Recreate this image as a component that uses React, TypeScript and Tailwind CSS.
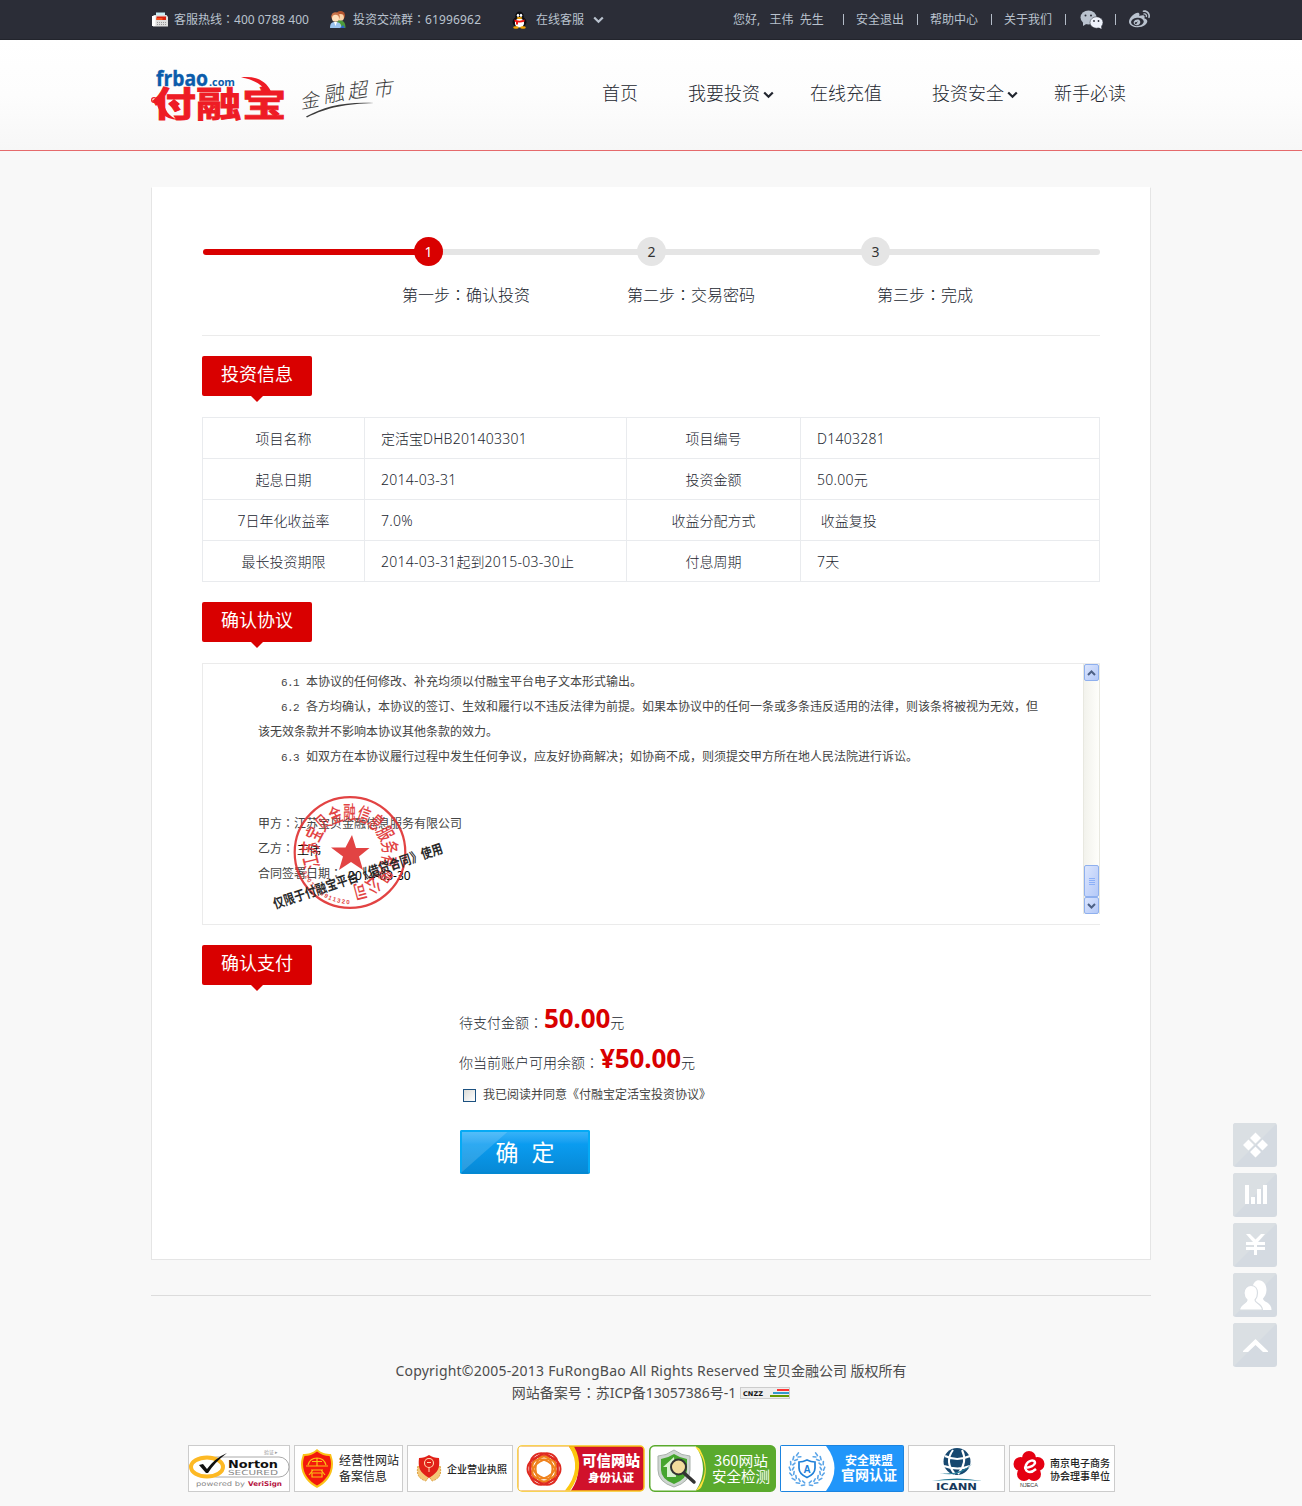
import React from "react";
import { FaWeibo } from "react-icons/fa";

const cjk = "font-['Noto_Sans','Noto_Sans_CJK_SC',sans-serif]";
const S = "'Noto Sans CJK SC', sans-serif";

function Colon() {
  return <span className="font-['Noto_Sans_CJK_TC',sans-serif] leading-none">：</span>;
}

function Chevron({ color, size = 11 }: { color: string; size?: number }) {
  return (
    <svg width={size} height="8" viewBox="0 0 11 8" className="shrink-0">
      <path d="M1.2 1.5 5.5 5.8 9.8 1.5" fill="none" stroke={color} strokeWidth="2.2" />
    </svg>
  );
}

function TopBar() {
  const sep = <span className="h-[11px] w-px bg-[#b4bcc8]" />;
  return (
    <div className="h-10 border-b border-[#22242c] bg-[#2b2d37]">
      <div className="mx-auto flex h-[39px] w-[1000px] items-center text-xs whitespace-nowrap text-[#b9c2ce]">
        <svg width="18" height="18" viewBox="0 0 18 18">
          <path d="M5 1.500h9v5H5z" fill="#c9eef5" />
          <path d="M3 4h12.500l1.500 2v9.500H2V5z" fill="#dedede" />
          <path d="M1 5h3.500v10H1z" fill="#fff" />
          <path d="M5.500 5.500h9.500v3.500H5.500z" fill="#d8210d" />
          <path d="M5.500 7h6v2h-6z" fill="#f4511b" />
          <path d="M6 11.500h9M6 13.500h9" stroke="#999" strokeDasharray="1 1" />
        </svg>
        <span className="ml-[5px] w-[157px]">客服热线<Colon />400 0788 400</span>
        <svg width="18" height="20" viewBox="0 0 18 20" className="-ml-0.5 shrink-0">
          <circle cx="11.500" cy="5.500" r="4.500" fill="#b5552f" />
          <circle cx="11.500" cy="7.500" r="3.400" fill="#fbd3a8" />
          <path d="M6.500 18c0-6 2-7.500 5-7.500s5 2 5 7.500z" fill="#4d9a3b" />
          <circle cx="6.500" cy="6.500" r="4.300" fill="#c9744a" />
          <circle cx="6.500" cy="8.300" r="3.500" fill="#ffe0bb" />
          <path d="M1 18c0-4.500 1.500-6 5.500-6s6 2 6 6z" fill="#9cc4ee" />
          <path d="M5 12h3l-1.500 4z" fill="#fff" />
          <path d="M11 18l3-3 2 3z" fill="#2c63c8" />
        </svg>
        <span className="ml-[6px] w-[159px]">投资交流群<Colon /><span className="tracking-[0.15px]">61996962</span></span>
        <svg width="17" height="18" viewBox="0 0 17 18" className="-ml-px shrink-0">
          <ellipse cx="8.500" cy="11" rx="7" ry="5.500" fill="#0d0d12" />
          <ellipse cx="8.500" cy="5.500" rx="4.300" ry="5" fill="#0d0d12" />
          <ellipse cx="8.500" cy="12" rx="4.600" ry="4.500" fill="#fff" />
          <ellipse cx="7" cy="4.300" rx="1.200" ry="1.600" fill="#fff" />
          <ellipse cx="10" cy="4.300" rx="1.200" ry="1.600" fill="#fff" />
          <ellipse cx="8.500" cy="7" rx="2.800" ry="1" fill="#f5a500" />
          <path d="M3.500 8.500c3 1.500 7 1.500 10 0v2c-3 1.200-7 1.200-10 0z" fill="#e11" />
          <path d="M5 10.500h2v3H5z" fill="#e11" />
          <ellipse cx="5" cy="16.500" rx="2.800" ry="1.200" fill="#f5a500" />
          <ellipse cx="12" cy="16.500" rx="2.800" ry="1.200" fill="#f5a500" />
        </svg>
        <span className="ml-[8px] mr-[9px]">在线客服</span>
        <Chevron color="#b9c2ce" />
        <div className="ml-auto flex items-center">
          <span className="w-[110px]">您好,&nbsp;&nbsp; 王伟&nbsp; 先生</span>
          {sep}
          <span className="mx-[12px] w-[49px]">安全退出</span>
          {sep}
          <span className="mx-[12px] w-[49px]">帮助中心</span>
          {sep}
          <span className="mx-[12px] w-[49px]">关于我们</span>
          {sep}
          <svg width="24" height="20" viewBox="0 0 24 20" className="ml-[14px] mr-[11px]">
            <ellipse cx="8.500" cy="7.500" rx="8" ry="7" fill="#b9c2ce" />
            <path d="M3 12v4l4-2.500z" fill="#b9c2ce" />
            <circle cx="5.500" cy="5.500" r="1" fill="#2b2d37" />
            <circle cx="11" cy="5.500" r="1" fill="#2b2d37" />
            <ellipse cx="16.500" cy="12.500" rx="6.500" ry="5.700" fill="#eef2fb" stroke="#2b2d37" strokeWidth=".5" />
            <path d="M18 17l3.500 2-.5-4z" fill="#eef2fb" />
            <circle cx="14" cy="11" r=".9" fill="#2b2d37" />
            <circle cx="18.500" cy="11" r=".9" fill="#2b2d37" />
          </svg>
          {sep}
          <FaWeibo className="mr-px ml-[13px] size-[21px] text-[#b9c2ce]" />
        </div>
      </div>
    </div>
  );
}

function Logo() {
  return (
    <svg width="245" height="60" viewBox="0 0 245 60" className="block">
      <text x="5" y="20.500" fontFamily="Open Sans" fontWeight="700" fontSize="20.500" fill="#0b5cab" stroke="#0b5cab" strokeWidth=".4" textLength="52" lengthAdjust="spacingAndGlyphs">frbao</text>
      <text x="58" y="20.500" fontFamily="Open Sans" fontWeight="700" fontSize="10.500" fill="#0b5cab" textLength="26" lengthAdjust="spacingAndGlyphs">.com</text>
      <g fill="#ee1c25" stroke="#ee1c25">
        <g fontFamily={S} fontWeight="700" strokeWidth=".9">
          <text transform="translate(1 51.5) scale(1.26 1)" fontSize="35">付</text>
          <text transform="translate(45 51.5) scale(1.3 1)" fontSize="35">融</text>
          <text transform="translate(91 51.5) scale(1.27 1)" fontSize="35">宝</text>
        </g>
        <path d="M90 12.500c14-2 25 3 30 14l-5 0c-4-7-12-12-25-14z" strokeWidth="0" />
        <path d="M5 32c0 14 8 22 22 23-9-4-14-9-15-22z" strokeWidth="0" />
        <path d="M23 34l6 5-6 5-6-5z" strokeWidth="0" />
        <circle cx="3" cy="35" r="2.400" fill="none" strokeWidth="1.200" />
      </g>
      <g fill="#3c3c3c" fontFamily={S} fontWeight="300">
        <text transform="translate(150 44) rotate(-10) skewX(-14)" fontSize="19">金</text>
        <text transform="translate(173 38) rotate(-10) skewX(-14)" fontSize="21">融</text>
        <text transform="translate(197 34) rotate(-8) skewX(-14)" fontSize="20">超</text>
        <text transform="translate(222 32) rotate(-6) skewX(-14)" fontSize="20">市</text>
        <path d="M155 51.500c18-10 38-15 68-13.500-28 1-46 4-67 14.500z" />
      </g>
    </svg>
  );
}

function Header() {
  return (
    <header className="h-[111px] border-b border-[#e56a6c] bg-gradient-to-b from-white via-[#fdfdfd] to-[#f7f7f7]">
      <div className="mx-auto flex w-[1000px] pt-[25px]">
        <Logo />
        <nav className="ml-[206px] mt-[14px] flex h-7 items-center text-[18px] font-light whitespace-nowrap text-[#22262f]">
          <a className="w-[86px]">首页</a>
          <a className="flex w-[122px] items-center gap-[3px]">我要投资<span className="pt-[3px]"><Chevron color="#22262f" /></span></a>
          <a className="w-[122px]">在线充值</a>
          <a className="flex w-[122px] items-center gap-[3px]">投资安全<span className="pt-[3px]"><Chevron color="#22262f" /></span></a>
          <a>新手必读</a>
        </nav>
      </div>
    </header>
  );
}

function Steps() {
  return (
    <div className="h-[99px] border-b border-[#ebebeb]">
      <div className="flex h-[29px] items-center pl-px text-sm text-[#333]">
        <span className="h-1.5 w-[213px] rounded-l-full bg-[#d90000]" />
        <span className="z-10 -ml-0.5 flex size-[29px] items-center justify-center rounded-full bg-[#d90000] text-white">1</span>
        <span className="-ml-px h-1.5 w-[196px] bg-[#e5e5e5]" />
        <span className="-ml-px flex size-[29px] items-center justify-center rounded-full bg-[#e5e5e5]">2</span>
        <span className="-ml-px h-1.5 w-[197px] bg-[#e5e5e5]" />
        <span className="-ml-px flex size-[29px] items-center justify-center rounded-full bg-[#e5e5e5]">3</span>
        <span className="-ml-px h-1.5 flex-1 rounded-r-full bg-[#e5e5e5]" />
      </div>
      <div className="mt-[17px] flex pl-[200px] text-base leading-6 font-light text-[#22262f]">
        <span className="w-[225px]">第一步<Colon />确认投资</span>
        <span className="w-[250px]">第二步<Colon />交易密码</span>
        <span>第三步<Colon />完成</span>
      </div>
    </div>
  );
}

function Tag({ children }: { children: React.ReactNode }) {
  return (
    <div className="h-[46px]">
      <h2 className="h-10 w-[110px] rounded-[2px] bg-[#d90000] text-center text-[18px] leading-[36px] text-white">{children}</h2>
      <div className="ml-[49px] h-0 w-0 border-x-[6.5px] border-t-[6px] border-x-transparent border-t-[#d90000]" />
    </div>
  );
}

const rows = [
  ["项目名称", "定活宝DHB201403301", "项目编号", "D1403281"],
  ["起息日期", "2014-03-31", "投资金额", "50.00元"],
  ["7日年化收益率", "7.0%", "收益分配方式", "\u00a0收益复投"],
  ["最长投资期限", "2014-03-31起到2015-03-30止", "付息周期", "7天"],
];

// Latin runs are spaced a little wider than the Chinese text around them.
function Mixed({ text }: { text: string }) {
  return (
    <>
      {text.split(/([0-9A-Z.%-]+)/).map((part, i) =>
        i % 2 ? <span key={i} className="tracking-[0.25px]">{part}</span> : part,
      )}
    </>
  );
}

function InfoTable() {
  return (
    <div className="mt-[15px] border-t border-l border-[#e9ebee] text-sm font-light text-[#22262f]">
      {rows.map((r) => (
        <div key={r[0]} className="grid h-[41px] grid-cols-[162px_262px_174px_299px] text-center leading-[41px] *:h-[41px] *:border-r *:border-b *:border-[#e9ebee]">
          <div>{r[0]}</div>
          <div className="pl-4 text-left"><Mixed text={r[1]} /></div>
          <div>{r[2]}</div>
          <div className="pl-4 text-left"><Mixed text={r[3]} /></div>
        </div>
      ))}
    </div>
  );
}

const ringChars = "江苏宝贝金融信息服务有限公司".split("");
const ringDigits = "3201000911320".split("");

function Seal() {
  return (
    <svg width="190" height="125" viewBox="265 790 190 125" className="absolute top-[126px] left-[62px]">
      <g fill="#e03434" opacity=".92">
        <circle cx="350" cy="852.500" r="55.300" fill="none" stroke="#e03434" strokeWidth="2.200" />
        <path d="M352 835l4 13 13.500 0-10.500 8.500 4 13.500-12-8-12 8 4-13.500-12-9 14.500 0z" />
        {ringChars.map((c, i) => (
          <text key={i} transform={`translate(350 852.5) rotate(${-104 + i * 20.7}) translate(0 -33) scale(.82 1.25)`} textAnchor="middle" fontFamily={S} fontWeight="500" fontSize="15.500">{c}</text>
        ))}
        {ringDigits.map((c, i) => (
          <text key={i} transform={`translate(350 852.5) rotate(${66 - i * 5.3}) translate(0 51.500)`} textAnchor="middle" fontFamily="Liberation Sans" fontWeight="700" fontSize="6">{c}</text>
        ))}
      </g>
      <text transform="translate(275 909) rotate(-18.5)" fontFamily={S} fontWeight="600" fontSize="13.500" fill="#2a2a2a" textLength="178" lengthAdjust="spacingAndGlyphs">仅限于付融宝平台《借贷合同》使用</text>
    </svg>
  );
}

function Scrollbar() {
  const btn = "flex w-[15px] items-center justify-center rounded-[2px] border border-[#8fb0ee] bg-gradient-to-br from-[#dbe5fd] to-[#b4c9f8]";
  return (
    <div className="flex h-[250px] w-[17px] flex-col items-center border-x border-[#e8e8e0] bg-gradient-to-r from-[#f2f2ec] to-[#fefefb]">
      <div className={`${btn} h-[17px]`}>
        <svg width="9" height="6" viewBox="0 0 9 6"><path d="M1 5l3.500-3.500L8 5" fill="none" stroke="#4d6185" strokeWidth="2" /></svg>
      </div>
      <div className={`${btn} mt-auto h-[32px]`}>
        <div className="flex flex-col gap-px">
          <i className="h-px w-1.5 bg-[#8cb0f8]" /><i className="h-px w-1.5 bg-[#8cb0f8]" /><i className="h-px w-1.5 bg-[#8cb0f8]" /><i className="h-px w-1.5 bg-[#8cb0f8]" />
        </div>
      </div>
      <div className={`${btn} h-[17px]`}>
        <svg width="9" height="6" viewBox="0 0 9 6"><path d="M1 1l3.500 3.500L8 1" fill="none" stroke="#4d6185" strokeWidth="2" /></svg>
      </div>
    </div>
  );
}

function Clause({ n }: { n: string }) {
  return <span className="ml-[23px] inline-block w-[25px] font-['Liberation_Mono',monospace] text-[11px] leading-none tracking-[-0.6px]">{n}</span>;
}

function Agreement() {
  return (
    <div className="relative mt-[15px] flex h-[262px] justify-between border-y border-l border-[#ebebeb]">
      <div className="pt-[5px] pl-[55px] text-xs leading-[25px] whitespace-nowrap text-[#444]">
        <p><Clause n="6.1" />本协议的任何修改、补充均须以付融宝平台电子文本形式输出。</p>
        <p><Clause n="6.2" />各方均确认，本协议的签订、生效和履行以不违反法律为前提。如果本协议中的任何一条或多条违反适用的法律，则该条将被视为无效，但</p>
        <p>该无效条款并不影响本协议其他条款的效力。</p>
        <p><Clause n="6.3" />如双方在本协议履行过程中发生任何争议，应友好协商解决；如协商不成，则须提交甲方所在地人民法院进行诉讼。</p>
        <div className="mt-[42px]">
          <p>甲方<Colon />江苏宝贝金融信息服务有限公司</p>
          <p className="flex h-[25px]"><span>乙方<Colon /></span><span className="mt-[2px] ml-[3px] text-black">王伟</span></p>
          <p className="flex h-[25px]"><span>合同签署日期<Colon /></span><span className="mt-[2px] ml-[6px] text-black">2014-03-30</span></p>
        </div>
      </div>
      <Seal />
      <Scrollbar />
    </div>
  );
}

function Payment() {
  return (
    <div className="pl-[257px] text-[#22262f]">
      <p className="mt-[7px] h-10 text-sm leading-10 font-light">待支付金额<Colon /><b className="ml-px text-[26px] leading-[40px] font-bold tracking-[-0.1px] text-[#d90000]">50.00</b>元</p>
      <p className="h-10 text-sm leading-10 font-light">你当前账户可用余额<Colon /><b className="ml-px text-[26px] leading-[40px] font-bold tracking-[-0.1px] text-[#d90000]">¥50.00</b>元</p>
      <label className="mt-[7px] flex h-5 items-center text-xs text-[#444]">
        <span className="mr-[7px] ml-1 size-[13px] border border-[#1c5180] bg-gradient-to-br from-[#dcdcd7] to-white" />
        我已阅读并同意《付融宝定活宝投资协议》
      </label>
      <button className="relative mt-[25px] ml-px block h-[44px] w-[130px] overflow-hidden rounded-[2px] border-2 border-[#05aaf5] border-b-[#0488d2] bg-gradient-to-b from-[#35b2f8] via-[#0a9cf0] via-30% to-[#0789d6] text-[23px] leading-[40px] text-white">
        <span className="absolute inset-0 bg-white/15 [clip-path:polygon(0_0,36%_0,0_100%)]" />
        <span className="relative">确<span className="inline-block w-[13px]" />定</span>
      </button>
    </div>
  );
}

function Laurel({ flip = false }: { flip?: boolean }) {
  return (
    <g transform={flip ? "translate(54 0) scale(-1 1)" : undefined} fill="none" stroke="#5ba5e8" strokeWidth="1.600" strokeLinecap="round">
      {[0, 1, 2, 3, 4, 5, 6, 7].map((i) => (
        <g key={i} transform={`rotate(${-75 + i * 19} 27 23.500)`}>
          <path d="M10.500 25.500l-1.300-3M12.500 25l1.300-2.500" />
        </g>
      ))}
    </g>
  );
}

function Badges() {
  const box = "block shrink-0";
  return (
    <div className="mx-auto mt-[41px] flex w-[927px] gap-1">
      <svg className={box} width="102" height="47" viewBox="0 0 102 47">
        <rect x=".5" y=".5" width="101" height="46" fill="#fff" stroke="#ccc" />
        <rect x="18" y="12" width="83" height="20" rx="10" fill="#fff" stroke="#aaa" />
        <ellipse cx="19" cy="22" rx="16" ry="9.500" fill="#fff" stroke="#fdb924" strokeWidth="4" />
        <path d="M11 20l4-1 4 5q8-11 20-16-12 9-19 20h-2z" fill="#111" />
        <text x="40" y="23" fontFamily="DejaVu Sans" fontWeight="700" fontSize="10.500" textLength="50" lengthAdjust="spacingAndGlyphs" fill="#111">Norton</text>
        <text x="40" y="29.500" fontFamily="DejaVu Sans" fontSize="7" textLength="50" lengthAdjust="spacingAndGlyphs" fill="#888">SECURED</text>
        <text x="76" y="9" fontFamily={S} fontSize="5" fill="#999">验证 ▸</text>
        <text x="8" y="41" fontFamily="DejaVu Sans" fontSize="6.500" textLength="49" lengthAdjust="spacingAndGlyphs" fill="#888">powered by</text>
        <text x="60" y="41" fontFamily="DejaVu Sans" fontWeight="700" fontSize="6.500" textLength="34" lengthAdjust="spacingAndGlyphs" fill="#b5123e">VeriSign</text>
      </svg>
      <svg className={box} width="109" height="47" viewBox="0 0 109 47">
        <rect x=".5" y=".5" width="108" height="46" fill="#fff" stroke="#ccc" />
        <path d="M23 4c4 4 9 5 14 5 1 4 2 6 2 10 0 12-8 20-16 24C15 39 7 31 7 19c0-4 1-6 2-10 5 0 10-1 14-5z" fill="#fbc116" />
        <path d="M23 6.500c4 3 8 4.500 12.500 4.500 1 3 1.500 5 1.500 8 0 10-6 17-14 21.500C15 36 9 29 9 19c0-3 .5-5 1.500-8 4.500 0 8.500-1.500 12.500-4.500z" fill="#f3180c" />
        <path d="M14 20q2-7 9-7t9 7M12 21h22M23 13v8M18 16.500h10M17 25h12M19 25l-4 5M27 25l4 5M18 28h10v4H18z" fill="none" stroke="#fbc116" strokeWidth="1.200" />
        <g fontFamily={S} fontSize="12" fill="#222"><text x="45" y="20">经营性网站</text><text x="45" y="36">备案信息</text></g>
      </svg>
      <svg className={box} width="106" height="47" viewBox="0 0 106 47">
        <rect x=".5" y=".5" width="105" height="46" fill="#fff" stroke="#ccc" />
        <path d="M11 21q-3 12 8 15l4-6zM33 21q3 12-8 15l-4-6z" fill="#f4c777" stroke="#dca13f" strokeDasharray="2 1" />
        <path d="M22 10c3 2 6 3 10 3 1 9 0 14-10 20-10-6-11-11-10-20 4 0 7-1 10-3z" fill="#e12018" />
        <circle cx="22" cy="18" r="4.500" fill="none" stroke="#ffd9b0" strokeWidth="1.100" />
        <path d="M20 17.500h4M22 23v4" stroke="#ffd9b0" />
        <text x="40" y="27.500" fontFamily={S} fontWeight="500" fontSize="10" fill="#222">企业营业执照</text>
      </svg>
      <svg className={box} width="128" height="47" viewBox="0 0 128 47">
        <rect x="1" y="1" width="126" height="45" rx="4" fill="#d0112b" stroke="#f7c61c" strokeWidth="1.500" />
        <path d="M4 1.500h48q17 22 2 44H4q-2.500 0-2.500-3V4.500q0-3 2.500-3z" fill="#fff" />
        <path d="M52 1.500h5q12 21-4 44h-5q18-22 4-44z" fill="#fcc70f" />
        <g fill="none">
          {[0, 60, 120].map((a) => (
            <ellipse key={a} cx="27" cy="24" rx="16.500" ry="13" transform={`rotate(${a} 27 24)`} stroke="#df2a20" strokeWidth="2" />
          ))}
          {[30, 90, 150].map((a) => (
            <ellipse key={a} cx="27" cy="24" rx="12.500" ry="8.500" transform={`rotate(${a} 27 24)`} stroke="#ef821c" strokeWidth="2" />
          ))}
        </g>
        <g fontFamily={S} fontWeight="800" fill="#fff"><text x="65" y="21" fontSize="14.500">可信网站</text><text x="71" y="37" fontSize="11.500">身份认证</text></g>
      </svg>
      <svg className={box} width="127" height="47" viewBox="0 0 127 47">
        <rect x=".75" y=".75" width="125.500" height="45.500" rx="5" fill="#5aaa2d" stroke="#5aaa2d" strokeWidth="1.500" />
        <path d="M6 1.500h41q14 22 0 44H6q-4.500 0-4.500-5V6q0-4.500 4.500-4.500z" fill="#fff" />
        <path d="M46 1.500q5 1 6 5 9 17 1 34-1 4-6 5 18-22-1-44z" fill="#ffe13a" />
        <path d="M25 5q8 6 16 6v14q0 12-16 17Q9 37 9 25V11q8 0 16-6z" fill="#cfd6d1" stroke="#a9b1ab" />
        <path d="M25 9q6 4 13 5v11q0 9-13 14-13-5-13-14V14q7-1 13-5z" fill="#46a52e" />
        <path d="M25 12l-11 10h4v10h9z" fill="#d9f2cf" />
        <circle cx="29.500" cy="22" r="7.500" fill="#f2dc9d" stroke="#333" strokeWidth="2" />
        <path d="M35 28l10 9" stroke="#333" strokeWidth="3.500" strokeLinecap="round" />
        <g fontFamily={S} fill="#fff"><text x="65" y="20.500" fontSize="14" textLength="54" lengthAdjust="spacingAndGlyphs">360网站</text><text x="63" y="37" fontSize="14.500">安全检测</text></g>
      </svg>
      <svg className={box} width="124" height="47" viewBox="0 0 124 47">
        <rect x=".5" y=".5" width="123" height="46" rx="1" fill="#2196fa" stroke="#1b84e0" />
        <path d="M1 1h45q17 22 0 45H1z" fill="#fff" />
        <Laurel /><Laurel flip />
        <path d="M27 15q4 2 8 2v6q0 6-8 9.500Q19 29 19 23v-6q4 0 8-2z" fill="#fff" stroke="#2080d8" strokeWidth="1.700" />
        <text x="27" y="27.500" textAnchor="middle" fontFamily="Liberation Sans" fontWeight="700" fontSize="10" fill="#2080d8">A</text>
        <g fontFamily={S} fontWeight="700" fill="#fff"><text x="65" y="20" fontSize="12">安全联盟</text><text x="61" y="35" fontSize="14">官网认证</text></g>
      </svg>
      <svg className={box} width="97" height="47" viewBox="0 0 97 47">
        <rect x=".5" y=".5" width="96" height="46" fill="#fff" stroke="#ccc" />
        <circle cx="49" cy="16.500" r="13.500" fill="#17486f" />
        <g fill="none" stroke="#fff" strokeWidth="2">
          <path d="M45 5q-9 12 2 24M54 5q6 12-4 24M37 11q12 6 25 0M36 21q14 5 26 0" />
        </g>
        <path d="M31 28q19 3 33-9-12 14-33 9zM24 36q25-5 50 0-25-2-50 0z" fill="#257c98" />
        <text x="28" y="45" fontFamily="DejaVu Sans" fontWeight="700" fontSize="9" textLength="41" lengthAdjust="spacingAndGlyphs" fill="#17395c">ICANN</text>
      </svg>
      <svg className={box} width="106" height="47" viewBox="0 0 106 47">
        <rect x=".5" y=".5" width="105" height="46" fill="#fff" stroke="#ccc" />
        <g fill="#e50012">
          <circle cx="20" cy="13" r="7" /><circle cx="11.500" cy="19" r="7" /><circle cx="28.500" cy="19" r="7" /><circle cx="15" cy="29" r="7" /><circle cx="25" cy="29" r="7" /><circle cx="20" cy="21" r="8" />
        </g>
        <path d="M15 23q10-1 11-5c0-4-7-3-9 2-2 6 3 10 10 4" fill="none" stroke="#fff" strokeWidth="2.500" />
        <text x="11" y="42" fontFamily="Liberation Sans" fontSize="6" textLength="18" lengthAdjust="spacingAndGlyphs" fill="#333">NJECA</text>
        <g fontFamily={S} fontWeight="500" fontSize="10" fill="#222"><text x="41" y="21.500">南京电子商务</text><text x="41" y="35">协会理事单位</text></g>
      </svg>
    </div>
  );
}

const sideIcons = [
  <path d="M22.500 9.500l5.500 5.500-5.500 5.500-5.500-5.500zM15.500 16.500l5.500 5.500-5.500 5.500-5.500-5.500zM29.500 16.500l5.500 5.500-5.500 5.500-5.500-5.500zM22.500 23.500l5.500 5.500-5.500 5.500-5.500-5.500z" />,
  <path d="M12 12h4v19h-4zM18 24h4v7h-4zM24 16h4v15h-4zM30 12h4v19h-4z" />,
  <path d="M13 11h4l5.500 5.500L28 11h4l-7 8h7v3h-8v2h8v3h-8v5h-3v-5h-8v-3h8v-2h-8v-3h7z" />,
  <g>
    <path d="M24 7.500c6-1 9.500 4 9.500 9.500 0 4-2 7-3.500 8.500 0 4 8.500 3 8.500 11.500H20V12c1-2 2-4 4-4.500z" />
    <path d="M18 12.500c4 0 6.500 3 6.500 7.500 0 3-1 5.500-2.500 7 0 3.500 7 3 7.500 10H6.500C7 30 14 30.500 14 27c-2-2-3-4-3-7 0-4.500 3-7.500 7-7.500z" stroke="#d8dde2" strokeWidth="1.200" />
  </g>,
  <path d="M22.500 16L35 28v1h-5l-7.500-7-7.500 7h-5v-1z" />,
];

function SideDock() {
  return (
    <aside className="absolute top-[1123px] right-[25px] flex flex-col gap-1.5">
      {sideIcons.map((ic, i) => (
        <svg key={i} width="44" height="44" viewBox="0 0 44 44" fill="#fff" className="rounded-[3px] bg-[#d4dae1]">
          <path d="M0 0h44L0 44z" fill="#dadfe3" />
          {ic}
        </svg>
      ))}
    </aside>
  );
}

export default function App() {
  return (
    <div className={`relative h-[1506px] w-[1302px] overflow-hidden bg-[#f8f8f8] ${cjk}`}>
      <TopBar />
      <Header />
      <main className="mx-auto mt-[36px] h-[1073px] w-[1000px] border border-t-white border-[#e5e5e5] bg-white px-[50px] pt-[49px]">
        <Steps />
        <div className="mt-5"><Tag>投资信息</Tag></div>
        <InfoTable />
        <div className="mt-[20px]"><Tag>确认协议</Tag></div>
        <Agreement />
        <div className="mt-5"><Tag>确认支付</Tag></div>
        <Payment />
      </main>
      <footer className="mx-auto mt-[35px] w-[1000px] border-t border-[#dcdcdc] pt-[64px] text-center text-sm leading-[22px] text-[#4c4c4c]">
        <p><span className="tracking-[0.22px]">Copyright©2005-2013 FuRongBao All Rights Reserved</span> 宝贝金融公司 版权所有</p>
        <p className="flex items-center justify-center gap-1">
          <span>网站备案号<Colon />苏ICP备13057386号-1</span>
          <svg width="50" height="12" viewBox="0 0 50 12">
            <rect x=".5" y=".5" width="49" height="11" fill="#eee" stroke="#ccc" />
            <text x="3" y="8.500" fontFamily="DejaVu Sans" fontWeight="700" fontSize="6.500" textLength="20" lengthAdjust="spacingAndGlyphs" fill="#111">CNZZ</text>
            <path d="M37 2h12v2H37z" fill="#f33" /><path d="M33 5h16v2H33z" fill="#39c" /><path d="M30 8h19v2H30z" fill="#690" />
          </svg>
        </p>
        <Badges />
      </footer>
      <SideDock />
    </div>
  );
}
